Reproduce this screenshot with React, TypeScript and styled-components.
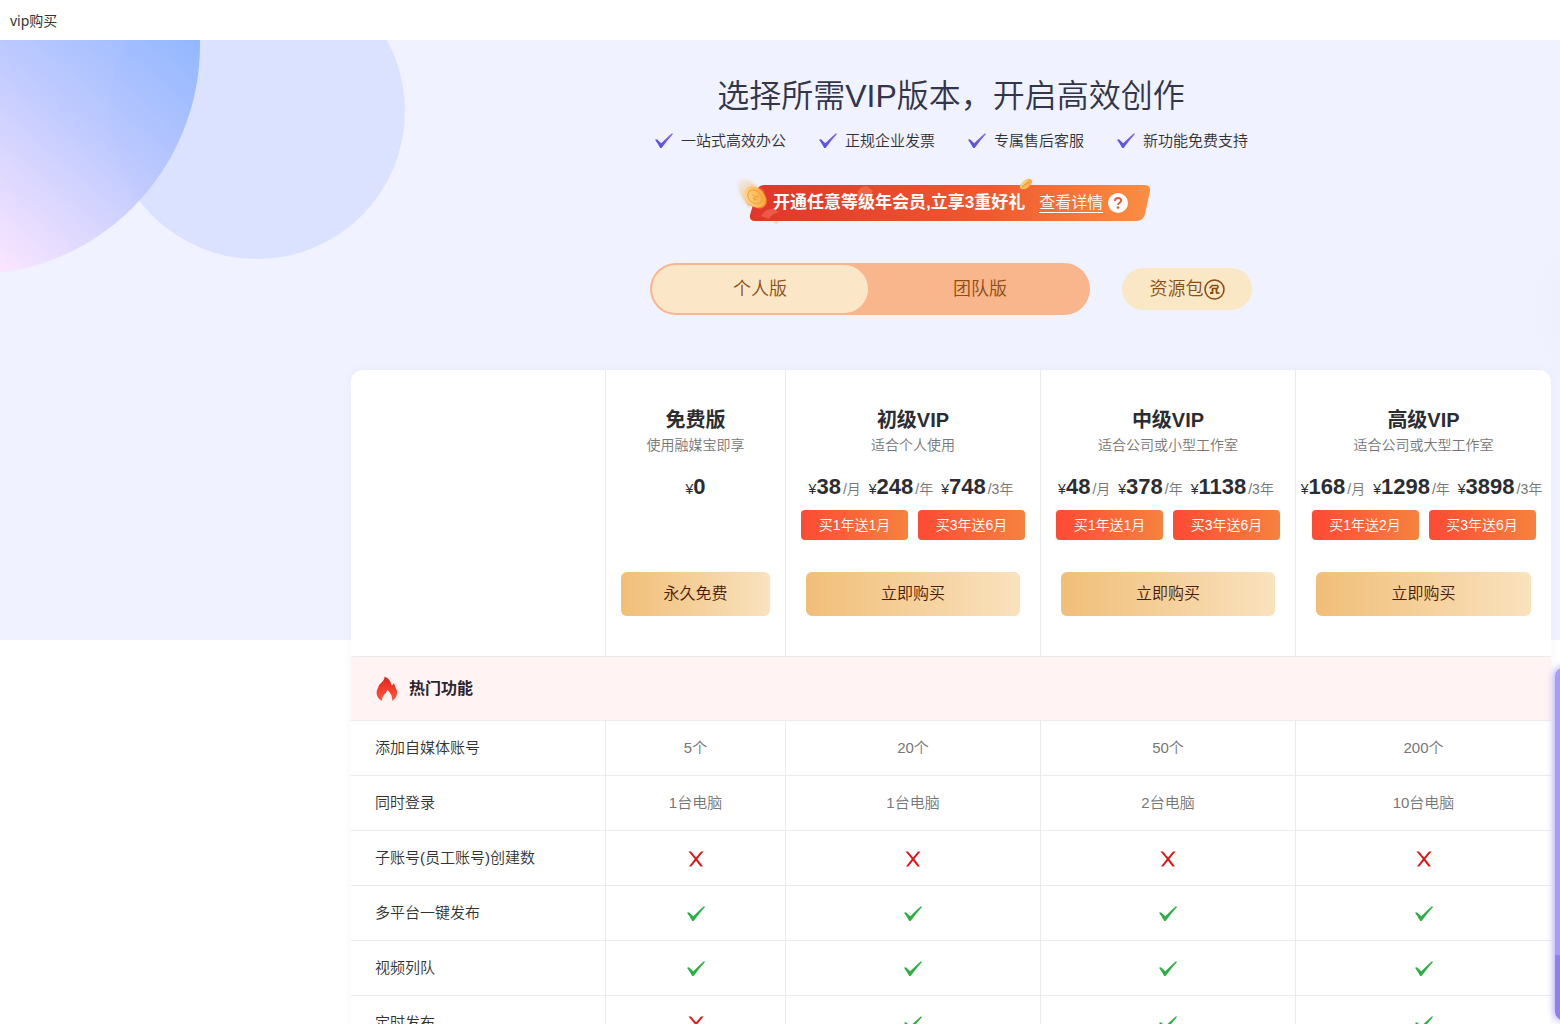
import React, { useState } from "react";
import styled, { createGlobalStyle, css } from "styled-components";

const GlobalStyle = createGlobalStyle`
  *, *::before, *::after { box-sizing: border-box; }
  body {
    margin: 0;
    background: #fff;
    color: #303133;
    font-family: "Liberation Sans", "Noto Sans CJK SC", sans-serif;
    font-size: 15px;
    font-weight: 350;
  }
  button { font-family: inherit; font-weight: inherit; border: 0; padding: 0; cursor: pointer; }
`;

const Page = styled.div`
  position: relative;
  height: 100vh;
  overflow: hidden;
`;

const TopBar = styled.header`
  height: 40px;
  padding: 2px 10px 0;
  display: flex;
  align-items: center;
  font-family: "Noto Sans", "Noto Sans CJK SC", sans-serif;
  font-size: 14px;
  font-weight: 400;
  line-height: 20px;
  color: #333;
`;

const Main = styled.main`
  position: relative;
  display: flex;
  justify-content: flex-end;
  padding: 34px 9px 0;
`;

const HeroArt = styled.svg`
  position: absolute;
  top: 0;
  left: 0;
  width: 100%;
  height: 600px;
  background: #f0f2ff;
`;

const Content = styled.div`
  position: relative;
  width: 100%;
  max-width: 1200px;
  display: flex;
  flex-direction: column;
  align-items: center;
`;

const Title = styled.h1`
  margin: 0 0 13px;
  font-size: 32px;
  font-weight: 350;
  line-height: 44px;
  color: #33354a;
`;

const Perks = styled.ul`
  display: flex;
  gap: 32px;
  margin: 0 0 34px;
  padding: 0;
  list-style: none;
`;

const Perk = styled.li`
  display: flex;
  align-items: center;
  gap: 7px;
  line-height: 20px;
`;

const Banner = styled.div`
  position: relative;
  width: 400px;
  height: 36px;
  margin-bottom: 42px;
`;

const BannerArt = styled.svg`
  position: absolute;
  top: -9px;
  left: -16px;
`;

const BannerText = styled.div`
  position: relative;
  height: 100%;
  padding-left: 22px;
  display: flex;
  align-items: center;
  font-size: 17px;
  line-height: 24px;
  color: #fff;
  white-space: nowrap;
`;

const DetailLink = styled.a`
  margin: 0 5px 0 14px;
  font-size: 16px;
  line-height: 18px;
  color: #fff;
  text-decoration: none;
  border-bottom: 1px solid #fff;
`;

const Switcher = styled.div`
  display: flex;
  align-items: center;
  gap: 32px;
  margin-bottom: 55px;
`;

const Tabs = styled.div`
  display: flex;
  gap: 4px;
  width: 440px;
  padding: 2px;
  border-radius: 26px;
  background: #f9b58c;
`;

const pillText = css`
  font-size: 18px;
  line-height: 24px;
  color: #8b4d10;
`;

const Tab = styled.button<{ $active: boolean }>`
  ${pillText}
  flex: 1;
  height: 48px;
  border-radius: 24px;
  background: ${(p) => (p.$active ? "#fbe7c8" : "transparent")};
`;

const PackButton = styled.button`
  ${pillText}
  display: flex;
  align-items: center;
  justify-content: center;
  width: 130px;
  height: 42px;
  border-radius: 21px;
  background: #f9e7c6;
`;

const PlanTable = styled.table`
  width: 100%;
  table-layout: fixed;
  border-collapse: separate;
  border-spacing: 0;
  background: #fff;
  border-radius: 12px;
  box-shadow: 0 0 12px rgba(60, 60, 120, 0.04);
`;

const WideCol = styled.col`
  width: 21.25%;
`;

const FreeCol = styled.col`
  width: 15%;
`;

const cellLine = css`
  padding: 0;
  border-bottom: 1px solid #ebebee;
  &:not(:last-child) { border-right: 1px solid #ebebee; }
`;

const HeadCell = styled.th`
  ${cellLine}
  height: 287px;
  vertical-align: top;
  font-weight: inherit;
`;

const Plan = styled.div`
  display: flex;
  flex-direction: column;
  align-items: center;
  padding: 36px 0 40px;
`;

const PlanName = styled.h2`
  margin: 0;
  font-size: 20px;
  line-height: 28px;
  color: #2c2d33;
`;

const PlanNote = styled.p`
  margin: 0 0 16px;
  font-size: 14px;
  line-height: 22px;
  color: #777;
`;

const Prices = styled.div`
  display: flex;
  justify-content: center;
  gap: 4px;
  height: 30px;
  margin-bottom: 8px;
  white-space: nowrap;
  font-size: 14px;
  line-height: 30px;
  color: #2c2d33;
`;

const Amount = styled.b`
  font-size: 22px;
`;

const Unit = styled.span`
  margin: 0 4px 0 2px;
  color: #777;
`;

const Gifts = styled.div`
  display: flex;
  gap: 10px;
  height: 30px;
  margin-bottom: 32px;
`;

const Gift = styled.span`
  width: 107px;
  border-radius: 4px;
  background: linear-gradient(90deg, #ff4a34, #f6823e);
  font-size: 14px;
  line-height: 30px;
  color: #fff;
`;

const BuyButton = styled.button<{ $narrow: boolean }>`
  width: ${(p) => (p.$narrow ? "calc(100% - 30px)" : "calc(100% - 40px)")};
  height: 44px;
  border-radius: 6px;
  background: linear-gradient(90deg, #f1be78, #f9e2be);
  font-size: 16px;
  line-height: 24px;
  color: #4a1c06;
`;

const GroupCell = styled.th`
  height: 64px;
  padding: 0 24px;
  border-bottom: 1px solid #ebebee;
  background: #fff4f3;
`;

const GroupTitle = styled.div`
  display: flex;
  align-items: center;
  gap: 10px;
  font-size: 16px;
  line-height: 24px;
  color: #2c2430;
`;

const FeatureName = styled.th`
  ${cellLine}
  height: 55px;
  padding-left: 24px;
  line-height: 20px;
  text-align: left;
  font-weight: inherit;
  color: #333;
`;

const FeatureValue = styled.td`
  ${cellLine}
  height: 55px;
  line-height: 20px;
  text-align: center;
  color: #777;
`;

const CellIcon = styled.svg`
  display: block;
  margin: 2px auto 0;
`;

const SidePanel = styled.aside`
  position: fixed;
  right: -145px;
  bottom: 4px;
  width: 150px;
  height: 352px;
  border-radius: 8px;
  background: linear-gradient(#a99bfb 0 287px, #8f7ff3 287px);
  box-shadow: 0 0 8px #9c8cf8;
`;

const CHECK = "M1 7.800 3 7.200 7.200 11.200C10.800 7.800 14 4.600 18 1.200L19 2C15.200 6.200 11.600 10.800 7.600 16H6.200C4.600 13.200 3 10.400 1 7.800Z";

const PerkCheck = () => (
  <svg width="20" height="18" viewBox="0 0 20 18" aria-hidden="true">
    <defs>
      <linearGradient id="perk" x1="0" y1="1" x2="1" y2="0">
        <stop offset="0" stopColor="#4d4de0" />
        <stop offset="1" stopColor="#8a63f0" />
      </linearGradient>
    </defs>
    <path d={CHECK} fill="url(#perk)" />
  </svg>
);

const Yes = () => (
  <CellIcon width="20" height="18" viewBox="0 0 20 18" role="img" aria-label="支持">
    <path d={CHECK} fill="#2aaf45" />
  </CellIcon>
);

const No = () => (
  <CellIcon width="20" height="18" viewBox="0 0 20 18" role="img" aria-label="不支持">
    <path d="M2.500 1.500H5L10 7.400 15 1.500H17.500L11.300 9 17 16.500H14.500L10 10.700 5.300 16.500H3L8.800 9Z" fill="#e01313" />
  </CellIcon>
);

const Flame = () => (
  <svg width="24" height="26" viewBox="0 0 24 26" aria-hidden="true">
    <defs>
      <linearGradient id="flame" x1="0" y1="0" x2="0" y2="1">
        <stop offset="0" stopColor="#e5201c" />
        <stop offset="1" stopColor="#ff5a3c" />
      </linearGradient>
    </defs>
    <path
      d="M9.500.800C13.500 2 16 5.500 16.500 9.500C17.600 9 18.300 8.300 18.600 7.200C19.600 8.300 19.800 9.600 20.200 11C21.500 12.800 22.300 14.800 22 17C21.800 20.500 20 23.200 17 25C18 21 15.500 17 12.300 13.800C11.800 16 10.300 17.600 9 19C7.500 20.800 6.700 22.800 7.200 25C4 23.500 1.800 20.800 1.600 17.500C1.400 14.700 2.500 13 3.200 11.500C3.400 10.300 3.700 9.300 4.500 8.400C6.500 6.500 9.600 4.500 9.500.800Z"
      fill="url(#flame)"
    />
  </svg>
);

const PackIcon = () => (
  <svg width="21" height="21" viewBox="0 0 21 21" fill="none" stroke="#8b4d10" aria-hidden="true">
    <circle cx="10.500" cy="10.500" r="9.500" strokeWidth="1.600" />
    <path d="M5.500 9C6.800 8.400 7.400 7.300 8.200 6.500H13.500C14.500 7.300 14 8.600 13 9.500H8" strokeWidth="1.600" />
    <path d="M8.500 9.500V14H6M12.500 9.500V13.200C12.800 14.400 14.200 14.400 15.500 13.800" strokeWidth="1.800" />
  </svg>
);

const QuestionIcon = () => (
  <svg width="20" height="20" viewBox="0 0 20 20" aria-hidden="true">
    <circle cx="10" cy="10" r="10" fill="#fff" />
    <path d="M7 8c0-4 6.200-3.800 6.200-.4C13.200 9.800 10 9.700 10 12" fill="none" stroke="#ee5b2e" strokeWidth="2" />
    <circle cx="10" cy="14.600" r="1.300" fill="#ee5b2e" />
  </svg>
);

const BannerBackdrop = () => (
  <BannerArt width="420" height="52" viewBox="0 0 420 52" aria-hidden="true">
    <defs>
      <linearGradient id="ribbon">
        <stop offset="0" stopColor="#e0352b" />
        <stop offset=".6" stopColor="#f0592f" />
        <stop offset="1" stopColor="#fb8f43" />
      </linearGradient>
      <linearGradient id="coin" x1="0" y1="0" x2="1" y2="1">
        <stop offset="0" stopColor="#ffe39a" />
        <stop offset="1" stopColor="#f79a2c" />
      </linearGradient>
      <linearGradient id="trail" x1=".1" y1="0" x2=".8" y2=".8">
        <stop offset="0" stopColor="#f6c98a" stopOpacity=".1" />
        <stop offset="1" stopColor="#f4a74f" />
      </linearGradient>
      <filter id="soft" x="-20%" y="-20%" width="140%" height="140%">
        <feGaussianBlur stdDeviation="1" />
      </filter>
    </defs>
    <path d="M29 9H409Q416 9 415 15L410 38Q408 45 402 45H20Q14 45 15 39L22 15Q23 9 29 9Z" fill="url(#ribbon)" />
    <path d="M26 40Q30 33 38 33L44 36Q36 38 34 43ZM122 18Q124 10 132 10L138 15Q134 24 126 28Z" fill="#ff9c77" opacity=".35" />
    <path d="M38 46 42 45 44 47 41 48Z" fill="#f8a98c" opacity=".4" />
    <path d="M3 4Q8 1 15 5L29 16 14 31 5 18Q1 10 3 4Z" fill="url(#trail)" filter="url(#soft)" />
    <ellipse cx="21" cy="22" rx="9" ry="12" transform="rotate(-48 21 22)" fill="#f08a25" />
    <ellipse cx="20" cy="21" rx="9" ry="12" transform="rotate(-48 20 21)" fill="url(#coin)" />
    <ellipse cx="20" cy="21" rx="6" ry="8" transform="rotate(-48 20 21)" fill="none" stroke="#f3a035" />
    <path d="m17 18 3 3 4-1M20 21l-1 4M18 22l4 2" fill="none" stroke="#f3a035" />
    <ellipse cx="291" cy="8" rx="7" ry="4" transform="rotate(-38 291 8)" fill="url(#coin)" />
    <path d="m287 11 7-5" stroke="#ee9a2b" strokeWidth="1.500" />
  </BannerArt>
);

type Price = { amount: string; unit?: string };
type PlanInfo = { name: string; note: string; prices: Price[]; gifts: string[]; action: string };

const perks = ["一站式高效办公", "正规企业发票", "专属售后客服", "新功能免费支持"];

const yearly = (month: string, year: string, three: string): Price[] => [
  { amount: month, unit: "/月" },
  { amount: year, unit: "/年" },
  { amount: three, unit: "/3年" },
];

const plans: PlanInfo[] = [
  { name: "免费版", note: "使用融媒宝即享", prices: [{ amount: "0" }], gifts: [], action: "永久免费" },
  { name: "初级VIP", note: "适合个人使用", prices: yearly("38", "248", "748"), gifts: ["买1年送1月", "买3年送6月"], action: "立即购买" },
  { name: "中级VIP", note: "适合公司或小型工作室", prices: yearly("48", "378", "1138"), gifts: ["买1年送1月", "买3年送6月"], action: "立即购买" },
  { name: "高级VIP", note: "适合公司或大型工作室", prices: yearly("168", "1298", "3898"), gifts: ["买1年送2月", "买3年送6月"], action: "立即购买" },
];

const features: { name: string; values: (string | boolean)[] }[] = [
  { name: "添加自媒体账号", values: ["5个", "20个", "50个", "200个"] },
  { name: "同时登录", values: ["1台电脑", "1台电脑", "2台电脑", "10台电脑"] },
  { name: "子账号(员工账号)创建数", values: [false, false, false, false] },
  { name: "多平台一键发布", values: [true, true, true, true] },
  { name: "视频列队", values: [true, true, true, true] },
  { name: "定时发布", values: [false, true, true, true] },
];

export default function App() {
  const [edition, setEdition] = useState("个人版");
  return (
    <Page>
      <GlobalStyle />
      <TopBar>vip购买</TopBar>
      <Main>
        <HeroArt aria-hidden="true">
          <defs>
            <linearGradient id="orb" gradientUnits="userSpaceOnUse" x1="200" y1="0" x2="0" y2="234">
              <stop offset="0" stopColor="#8bb3ff" />
              <stop offset=".45" stopColor="#bac6ff" />
              <stop offset="1" stopColor="#fde5ff" />
            </linearGradient>
            <radialGradient id="haze">
              <stop offset="0" stopColor="#e9ecfc" />
              <stop offset="1" stopColor="#f0f2ff" />
            </radialGradient>
          </defs>
          <circle cx="104%" cy="270" r="100" fill="url(#haze)" />
          <circle cx="257" cy="71" r="148" fill="#dbe2ff" />
          <circle cx="-30" cy="5" r="230" fill="url(#orb)" opacity=".91" />
        </HeroArt>
        <Content>
          <Title>选择所需VIP版本，开启高效创作</Title>
          <Perks>
            {perks.map((p) => (
              <Perk key={p}>
                <PerkCheck />
                {p}
              </Perk>
            ))}
          </Perks>
          <Banner>
            <BannerBackdrop />
            <BannerText>
              <b>开通任意等级年会员,立享3重好礼</b>
              <DetailLink href="#details">查看详情</DetailLink>
              <QuestionIcon />
            </BannerText>
          </Banner>
          <Switcher>
            <Tabs role="tablist">
              {["个人版", "团队版"].map((t) => (
                <Tab key={t} role="tab" aria-selected={edition === t} $active={edition === t} onClick={() => setEdition(t)}>
                  {t}
                </Tab>
              ))}
            </Tabs>
            <PackButton>
              资源包
              <PackIcon />
            </PackButton>
          </Switcher>
          <PlanTable>
            <colgroup>
              <WideCol />
              <FreeCol />
              <WideCol />
              <WideCol />
              <WideCol />
            </colgroup>
            <thead>
              <tr>
                <HeadCell as="td" />
                {plans.map((plan) => (
                  <HeadCell key={plan.name} scope="col">
                    <Plan>
                      <PlanName>{plan.name}</PlanName>
                      <PlanNote>{plan.note}</PlanNote>
                      <Prices>
                        {plan.prices.map((price) => (
                          <span key={price.amount}>
                            ¥<Amount>{price.amount}</Amount>
                            {price.unit && <Unit>{price.unit}</Unit>}
                          </span>
                        ))}
                      </Prices>
                      <Gifts>
                        {plan.gifts.map((g) => (
                          <Gift key={g}>{g}</Gift>
                        ))}
                      </Gifts>
                      <BuyButton $narrow={plan.gifts.length === 0}>{plan.action}</BuyButton>
                    </Plan>
                  </HeadCell>
                ))}
              </tr>
            </thead>
            <tbody>
              <tr>
                <GroupCell colSpan={5} scope="colgroup">
                  <GroupTitle>
                    <Flame />
                    热门功能
                  </GroupTitle>
                </GroupCell>
              </tr>
              {features.map((f) => (
                <tr key={f.name}>
                  <FeatureName scope="row">{f.name}</FeatureName>
                  {f.values.map((v, i) => (
                    <FeatureValue key={i}>{typeof v === "string" ? v : v ? <Yes /> : <No />}</FeatureValue>
                  ))}
                </tr>
              ))}
            </tbody>
          </PlanTable>
        </Content>
      </Main>
      <SidePanel />
    </Page>
  );
}
